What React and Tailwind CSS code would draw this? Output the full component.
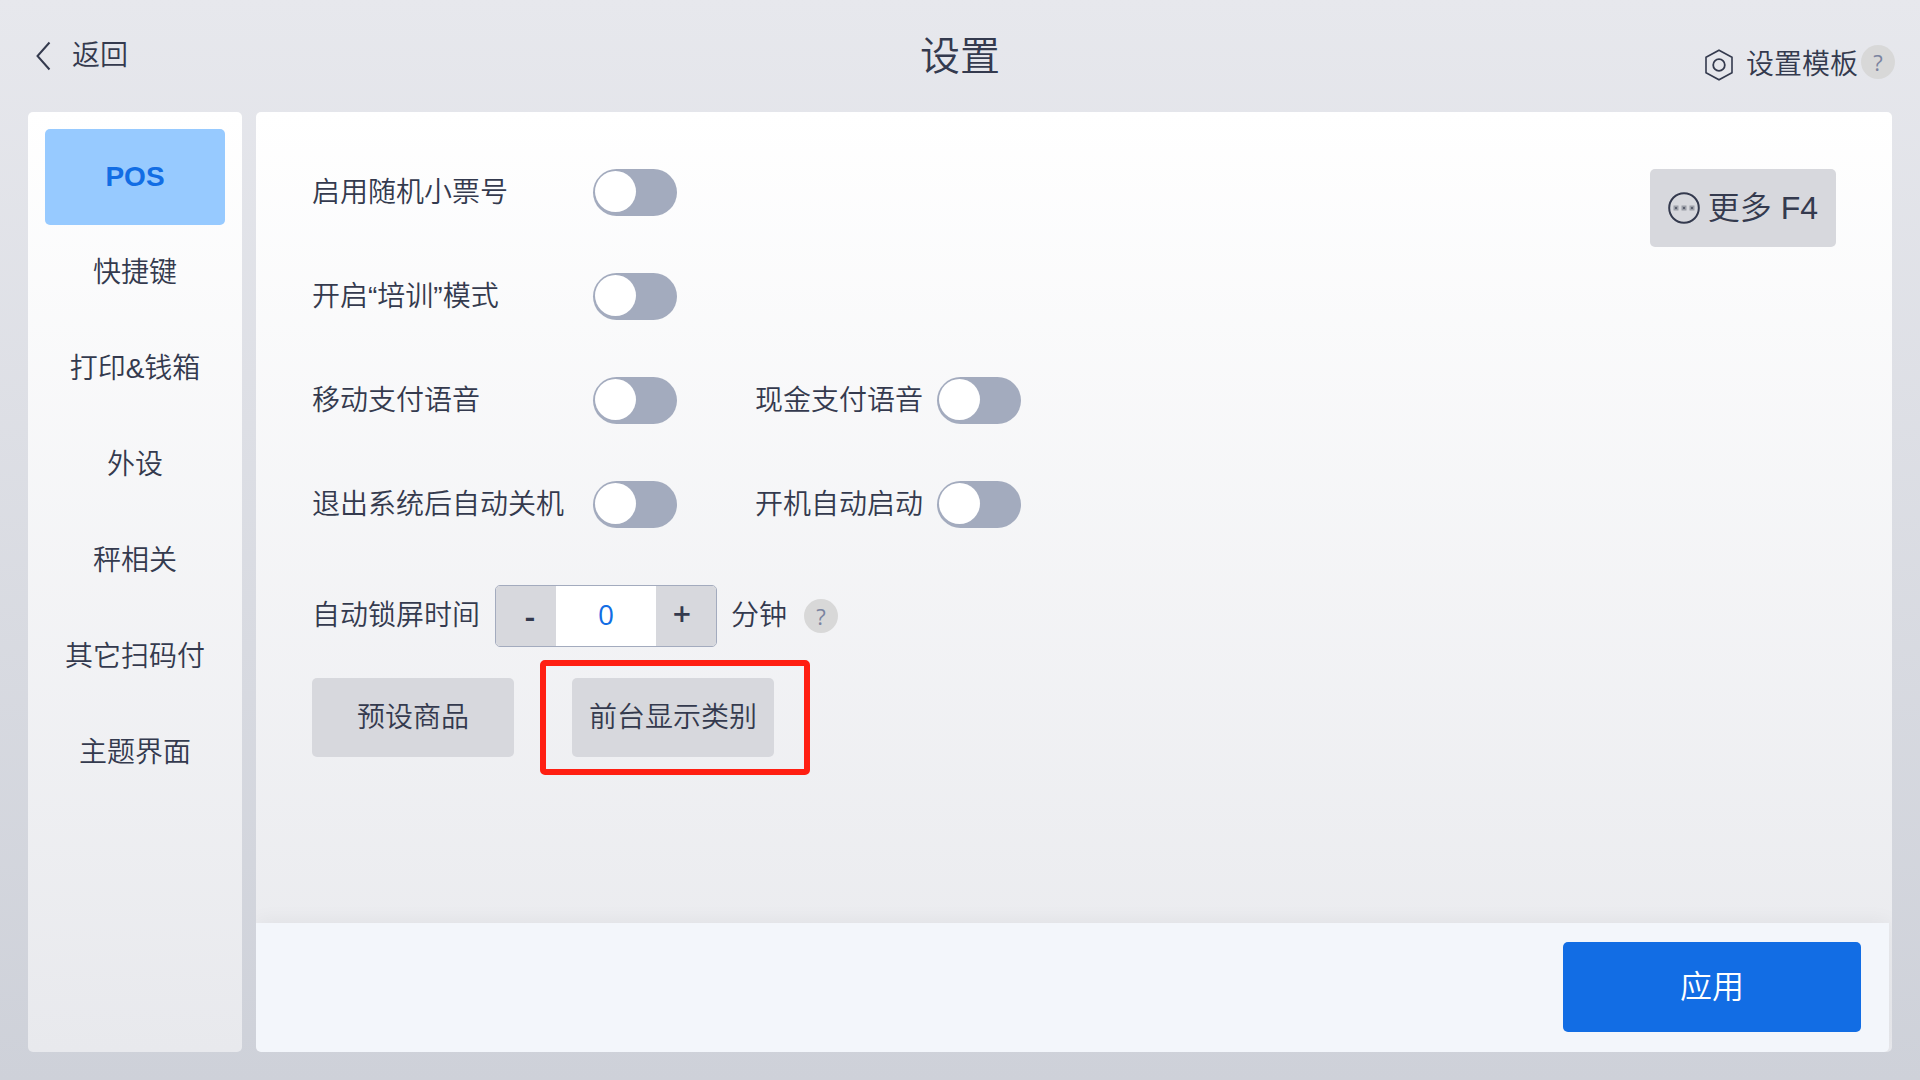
import { useState } from "react";

const tabs = ["POS", "快捷键", "打印&钱箱", "外设", "秤相关", "其它扫码付", "主题界面"];

const switchRows = [
  [{ id: "randomTicket", label: "启用随机小票号" }],
  [{ id: "training", label: "开启“培训”模式" }],
  [
    { id: "mobileVoice", label: "移动支付语音" },
    { id: "cashVoice", label: "现金支付语音" }
  ],
  [
    { id: "autoShutdown", label: "退出系统后自动关机" },
    { id: "autoStart", label: "开机自动启动" }
  ]
];

function BackIcon() {
  return (
    <svg width="15" height="30" viewBox="0 0 15 30" fill="none" stroke="currentColor" strokeWidth="2">
      <path d="M13.5 1.5 1.5 15l12 13.5" />
    </svg>
  );
}

function TemplateIcon() {
  return (
    <svg width="28" height="32" viewBox="0 0 28 32" fill="none" stroke="currentColor" strokeWidth="1.6">
      <path d="M14 1.2 27 8.2v15.6l-13 7-13-7V8.2z" />
      <circle cx="14" cy="16" r="5.8" strokeWidth="1.8" />
    </svg>
  );
}

function MoreIcon() {
  return (
    <svg width="32" height="32" viewBox="0 0 32 32" fill="none">
      <circle cx="16" cy="16" r="14.8" stroke="currentColor" strokeWidth="2" />
      <g fill="#9b9ea7">
        <rect x="5.5" y="13.5" width="5" height="5" />
        <rect x="13.5" y="13.5" width="5" height="5" />
        <rect x="21.5" y="13.5" width="5" height="5" />
      </g>
      <g fill="#5b606e">
        <rect x="7" y="15" width="2" height="2" />
        <rect x="15" y="15" width="2" height="2" />
        <rect x="23" y="15" width="2" height="2" />
      </g>
    </svg>
  );
}

function HelpButton({ label }) {
  return (
    <button
      type="button"
      aria-label={label}
      className="flex size-[34px] items-center justify-center rounded-full bg-[#d8d8d8] font-['Open_Sans',sans-serif] text-[22px] leading-none font-normal text-[#7b84a0]"
    >
      ?
    </button>
  );
}

function Switch({ id, checked, onChange }) {
  return (
    <input
      id={id}
      type="checkbox"
      role="switch"
      checked={checked}
      onChange={onChange}
      className="h-[47px] w-[84px] shrink-0 cursor-pointer appearance-none rounded-full bg-[#a3abbe] px-[2px] pt-[2px] before:block before:size-[41px] before:rounded-full before:bg-white checked:bg-[#126de4] checked:before:ml-auto"
    />
  );
}

export default function App() {
  const [activeTab, setActiveTab] = useState("POS");
  const [enabled, setEnabled] = useState({});
  const [minutes, setMinutes] = useState(0);

  const toggle = (id) => setEnabled((prev) => ({ ...prev, [id]: !prev[id] }));

  return (
    <div className="flex min-h-screen flex-col bg-linear-to-b from-[#e7e8ed] to-[#ced1d9] font-['Liberation_Sans','Noto_Sans_CJK_SC',sans-serif] text-[28px] leading-10 font-[350] text-[#343a4e]">
      <header className="grid h-28 grid-cols-3 items-center px-[25px]">
        <a href="#back" className="flex items-center gap-[21px] justify-self-start pl-[11px]">
          <BackIcon />
          返回
        </a>
        <h1 className="text-center text-[40px]">设置</h1>
        <div className="flex items-start gap-[3px] justify-self-end pt-[18px]">
          <button type="button" className="flex items-center gap-[13px]">
            <TemplateIcon />
            设置模板
          </button>
          <HelpButton label="设置模板" />
        </div>
      </header>

      <div className="flex flex-1 gap-[14px] px-7 pb-7">
        <nav className="flex w-[214px] shrink-0 flex-col rounded-[5px] bg-linear-to-b from-white to-[#e8e9ed] p-[17px]">
          {tabs.map((tab) => (
            <button
              key={tab}
              type="button"
              onClick={() => setActiveTab(tab)}
              className={
                tab === activeTab
                  ? "h-24 rounded-[5px] bg-[#97caff] font-bold text-[#126de4]"
                  : "h-24 rounded-[5px]"
              }
            >
              {tab}
            </button>
          ))}
        </nav>

        <main className="flex min-w-0 flex-1 flex-col overflow-hidden rounded-[5px] bg-linear-to-b from-white to-[#e8e9ed]">
          <div className="flex flex-1 items-start justify-between px-14 pt-[57px] pb-14">
            <div>
              <div className="flex flex-col gap-[57px]">
                {switchRows.map((row) => (
                  <div key={row[0].id} className="flex items-center">
                    {row.map((item, index) => (
                      <div key={item.id} className={index ? "ml-[78px] flex items-center gap-[14px]" : "flex items-center"}>
                        <label htmlFor={item.id} className={index ? "" : "w-[281px]"}>
                          {item.label}
                        </label>
                        <Switch id={item.id} checked={Boolean(enabled[item.id])} onChange={() => toggle(item.id)} />
                      </div>
                    ))}
                  </div>
                ))}
              </div>

              <div className="mt-[57px] flex items-center">
                <label htmlFor="lockMinutes">自动锁屏时间</label>
                <div className="mr-[14px] ml-[15px] flex h-[62px] w-[222px] overflow-hidden rounded-[5px] border border-[#a3abbe] font-['Open_Sans',sans-serif]">
                  <button
                    type="button"
                    aria-label="减少"
                    onClick={() => setMinutes(Math.max(0, minutes - 1))}
                    className="w-[60px] bg-[#d7d8dd] pl-2 text-[32px] font-semibold"
                  >
                    -
                  </button>
                  <input
                    id="lockMinutes"
                    inputMode="numeric"
                    value={minutes}
                    onChange={(e) => setMinutes(Number(e.target.value) || 0)}
                    className="min-w-0 flex-1 bg-white pb-1 text-center font-normal text-[#126de4] outline-none"
                  />
                  <button
                    type="button"
                    aria-label="增加"
                    onClick={() => setMinutes(minutes + 1)}
                    className="w-[60px] bg-[#d7d8dd] pr-2 pb-1 text-[32px] font-semibold"
                  >
                    +
                  </button>
                </div>
                <span className="mr-[17px]">分钟</span>
                <HelpButton label="自动锁屏时间" />
              </div>

              <div className="mt-[13px] flex items-center gap-[26px]">
                <button type="button" className="h-[79px] w-[202px] rounded-[5px] bg-[#d7d8dd]">
                  预设商品
                </button>
                <div className="rounded-[5px] border-6 border-[#ff1f12] py-3 pr-[30px] pl-[26px]">
                  <button type="button" className="h-[79px] w-[202px] rounded-[5px] bg-[#d7d8dd]">
                    前台显示类别
                  </button>
                </div>
              </div>
            </div>

            <button
              type="button"
              className="flex h-[78px] items-center gap-2 rounded-[5px] bg-[#d7d8dd] px-[18px] text-[32px]"
            >
              <MoreIcon />
              更多 F4
            </button>
          </div>

          <footer className="mr-[3px] flex justify-end rounded-b-[5px] bg-[#f3f6fb] px-7 pt-[19px] pb-5 shadow-[0_-2px_20px_rgba(0,0,0,0.05)]">
            <button type="button" className="h-[90px] w-[298px] rounded-[5px] bg-[#126de4] text-[32px] text-white">
              应用
            </button>
          </footer>
        </main>
      </div>
    </div>
  );
}
